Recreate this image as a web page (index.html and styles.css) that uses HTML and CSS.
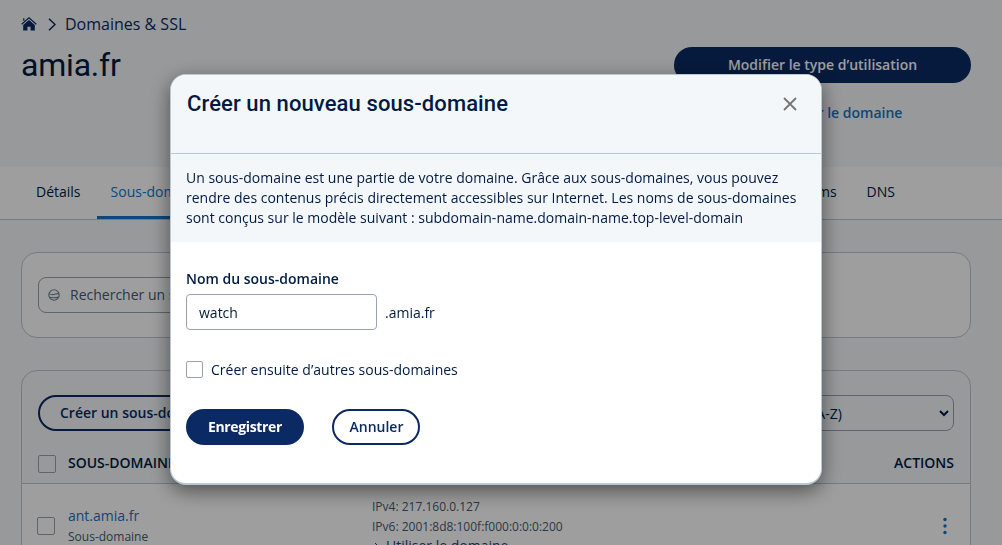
FILE: index.html
```html
<!DOCTYPE html>
<html lang="fr">
<head>
<meta charset="utf-8">
<title>Domaines &amp; SSL</title>
<link rel="stylesheet" href="styles.css">
</head>
<body>
<div class="page">
  <header class="header">
    <div class="heading">
      <nav class="breadcrumb">
        <svg class="home" viewBox="0 0 16 14"><path d="M.7 7.2 8 .9l7.3 6.3M2.8 3.8V1.2" fill="none" stroke="currentColor" stroke-width="1.2"/><path d="M8 3 2.2 8v5.6h4.2V9.8h3.2v3.8h4.2V8z" fill="currentColor"/></svg>
        <svg class="chevron" viewBox="0 0 8 13"><path d="M1 .8 7 6.5 1 12.2" fill="none" stroke="currentColor" stroke-width="1.5"/></svg>
        <span>Domaines &amp; SSL</span>
      </nav>
      <h1 class="domain">amia.fr</h1>
    </div>
    <div class="header-actions">
      <a class="usage-button">Modifier le type d’utilisation</a>
      <a class="renew">Renouveler le domaine</a>
    </div>
  </header>
  <nav class="tabs">
    <a class="tab">Détails</a>
    <a class="tab active">Sous-domaines</a>
    <a class="tab push">Noms</a>
    <a class="tab">DNS</a>
  </nav>
  <main class="content">
    <section class="card search-card">
      <div class="search">
        <svg class="globe" viewBox="0 0 12 12"><circle cx="6" cy="6" r="5.2"/><path d="M1 4.600c2.500 1.500 5 1 6.500.4 1.200-.4 2.200-.5 3.500-.2M1.300 8.300c3 .6 6.400.6 9.400-.2"/></svg>
        <span>Rechercher un sous-domaine</span>
      </div>
    </section>
    <section class="card list-card">
      <div class="toolbar">
        <a class="create">Créer un sous-domaine</a>
        <div class="sort"><span>Sous-domaine (A-Z)</span>
          <svg class="caret" viewBox="0 0 10 7"><path d="m1 1 4 4 4-4" fill="none" stroke="currentColor" stroke-width="2"/></svg>
        </div>
      </div>
      <div class="list-head">
        <i class="box"></i><span>SOUS-DOMAINE</span><span class="actions-label">ACTIONS</span>
      </div>
      <div class="row">
        <i class="box"></i>
        <div class="name"><a class="link">ant.amia.fr</a><span class="type">Sous-domaine</span></div>
        <div class="records"><span>IPv4: 217.160.0.127</span><span>IPv6: 2001:8d8:100f:f000:0:0:0:200</span>
          <a class="use"><svg class="use-arrow" viewBox="0 0 5 8"><path d="m1 1 3 3-3 3" fill="none" stroke="currentColor"/></svg>Utiliser le domaine</a></div>
        <svg class="more" viewBox="0 0 4 18"><circle cx="2" cy="2.500" r="1.700"/><circle cx="2" cy="9" r="1.700"/><circle cx="2" cy="15.500" r="1.700"/></svg>
      </div>
    </section>
  </main>
</div>
<div class="overlay">
  <div class="modal">
    <div class="modal-head">
      <h2 class="modal-title">Créer un nouveau sous-domaine</h2>
      <svg class="close" viewBox="0 0 14 14"><path d="m1 1 12 12M13 1 1 13" fill="none" stroke="currentColor" stroke-width="1.800"/></svg>
    </div>
    <p class="intro">Un sous-domaine est une partie de votre domaine. Grâce aux sous-domaines, vous pouvez<br>rendre des contenus précis directement accessibles sur Internet. Les noms de sous-domaines<br>sont conçus sur le modèle suivant : subdomain-name.domain-name.top-level-domain</p>
    <div class="form">
      <div class="label">Nom du sous-domaine</div>
      <div class="field"><div class="input">watch</div><span class="suffix">.amia.fr</span></div>
      <div class="option"><i class="check"></i><span>Créer ensuite d’autres sous-domaines</span></div>
      <div class="buttons"><a class="save">Enregistrer</a><a class="cancel">Annuler</a></div>
    </div>
  </div>
</div>
</body>
</html>
```
FILE: styles.css
```css
* { box-sizing: border-box; }
body { margin: 0; height: 545px; overflow: hidden; background: #f4f7fa; font: 14px/20px "Open Sans", sans-serif; color: #001b41; white-space: nowrap; }
.page { height: 545px; overflow: hidden; }
.header { height: 167px; padding: 13px 31px 0 21px; display: flex; justify-content: space-between; }
.breadcrumb { height: 22px; display: flex; align-items: center; font-size: 16px; line-height: 22px; color: #0b2a63; }
.home { width: 16px; height: 14px; }
.chevron { width: 8px; height: 13px; margin: 0 9px 0 11px; }
.domain { margin: 11px 0 0; font: 400 32px/38px Roboto, sans-serif; letter-spacing: -0.2px; color: #001b41; }
.header-actions { width: 297px; padding-top: 34px; display: flex; flex-direction: column; align-items: center; }
.usage-button { width: 297px; height: 36px; border-radius: 18px; background: #0b2a63; color: #fff; font-weight: 600; line-height: 36px; text-align: center; }
.renew { margin-top: 20px; padding-left: 4px; color: #1474c4; font-weight: 600; }
.tabs { height: 53px; padding: 0 107px 0 22px; display: flex; background: #fff; border-bottom: 1px solid #bcc8d4; }
.tab { height: 52px; padding: 0 14px; line-height: 50px; margin-right: 2px; }
.tab.active { color: #1474c4; border-bottom: 3px solid #1474c4; }
.tab.push { margin-left: auto; }
.tab:last-child { padding-right: 0; margin-right: 0; }
.content { padding: 32px 31px 0 21px; }
.card { border: 1px solid #bcc8d4; border-radius: 16px; }
.search-card { height: 86px; padding: 24px 16px; background: #fff; }
.search { width: 400px; height: 36px; padding: 0 9px; border: 1px solid #97a3b4; border-radius: 8px; display: flex; align-items: center; gap: 10px; color: #465a75; }
.globe { width: 12px; height: 12px; fill: none; stroke: #718095; stroke-width: 1.1; }
.list-card { height: 240px; margin-top: 32px; overflow: hidden; }
.toolbar { height: 60px; padding: 24px 16px 0; display: flex; justify-content: space-between; }
.create { height: 36px; padding: 0 20px; border: 2px solid #0b2a63; border-radius: 18px; color: #0b2a63; font-weight: 600; line-height: 32px; }
.sort { width: 270px; height: 36px; padding: 2px 4px 0 20px; border: 1px solid #97a3b4; border-radius: 8px; display: flex; align-items: center; justify-content: space-between; }
.sort span { padding-left: 10px; }
.caret { width: 10px; height: 7px; margin-top: -2px; }
.list-head { height: 53px; padding: 12px 16px 0; display: flex; align-items: center; font-weight: 600; border-bottom: 1px solid #bcc8d4; }
.box { width: 18px; height: 18px; border: 1px solid #97a3b4; border-radius: 2px; }
.list-head .box { margin: 1px 12px 0 0; }
.actions-label { margin-left: auto; }
.row { height: 100px; padding: 12px 23px 0 15px; display: flex; background: #fff; }
.row .box { margin: 21px 13px 0 0; }
.name { width: 304px; padding-top: 10px; display: flex; flex-direction: column; }
.link { color: #1474c4; }
.type { font-size: 12px; line-height: 22px; color: #465a75; }
.records { padding-top: 1px; display: flex; flex-direction: column; color: #465a75; font-size: 12px; }
.use { height: 20px; margin-top: -1px; color: #1c4478; font-size: 14px; display: flex; align-items: center; }
.use-arrow { width: 5px; height: 8px; margin: 0 7px 0 2px; }
.more { width: 4px; height: 18px; margin: 21px 0 0 auto; fill: #1474c4; }
.overlay { position: fixed; inset: 0; padding: 74px 0 0 170px; background: rgba(0, 0, 0, 0.38); }
.modal { width: 652px; height: 411px; overflow: hidden; background: #fff; border: 1px solid #b9c8d6; border-bottom-width: 2px; border-radius: 16px; box-shadow: 0 6px 20px rgba(0, 0, 0, 0.5); }
.modal-head { height: 79px; padding: 16px 24px 0 16px; display: flex; justify-content: space-between; background: #f4f7fa; border-bottom: 1px solid #b9c8d6; }
.modal-title { margin: 0; font: 500 22px/26px Roboto, sans-serif; letter-spacing: 0.1px; }
.close { width: 14px; height: 14px; margin-top: 6px; color: #757575; }
.intro { height: 88px; margin: 0; padding: 14px 15px; background: #f4f7fa; }
.form { padding: 27px 15px 0; }
.label { font-weight: 600; }
.field { margin-top: 5px; display: flex; align-items: center; gap: 8px; }
.suffix { padding-top: 2px; }
.input { width: 191px; height: 36px; padding-left: 12px; border: 1px solid #97a3b4; border-radius: 4px; line-height: 36px; }
.option { margin-top: 30px; display: flex; align-items: center; gap: 8px; }
.check { width: 17px; height: 17px; margin-bottom: 1px; border: 1px solid #97a3b4; border-radius: 2px; }
.buttons { margin-top: 29px; display: flex; gap: 28px; }
.save, .cancel { height: 36px; border-radius: 18px; text-align: center; line-height: 36px; }
.save { width: 118px; background: #0b2a63; color: #fff; font-weight: 700; letter-spacing: -0.35px; }
.cancel { width: 88px; padding-left: 1px; border: 2px solid #0b2a63; line-height: 32px; font-weight: 600; color: #0b2a63; }
```
